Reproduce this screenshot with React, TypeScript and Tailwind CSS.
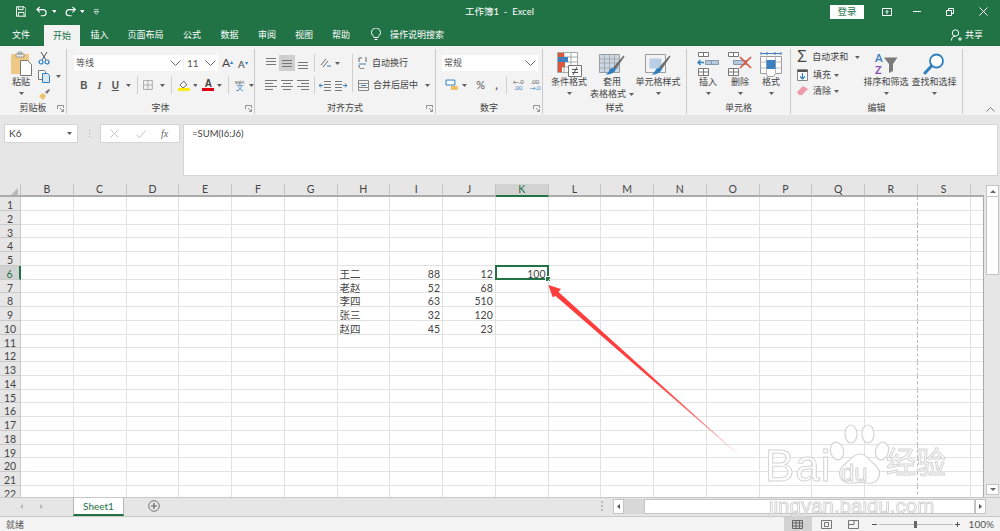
import React from 'react';

const sans = "font-['Lato','Noto_Sans_CJK_SC',sans-serif]";
const columns = ['B', 'C', 'D', 'E', 'F', 'G', 'H', 'I', 'J', 'K', 'L', 'M', 'N', 'O', 'P', 'Q', 'R', 'S'];
const rows = Array.from({ length: 22 }, (_, i) => i + 1);
const data: Record<number, [string, string, string]> = {
  6: ['王二', '88', '12'],
  7: ['老赵', '52', '68'],
  8: ['李四', '63', '510'],
  9: ['张三', '32', '120'],
  10: ['赵四', '45', '23'],
};

const Caret = ({ className = '' }: { className?: string }) => (
  <svg width="5" height="3" viewBox="0 0 5 3" className={className}>
    <path d="M0 0h5L2.5 3z" fill="#5f5f5f" />
  </svg>
);

const Launcher = () => (
  <svg width="7" height="7" viewBox="0 0 7 7" className="absolute right-[2px] bottom-[2px]">
    <path d="M.5 4V.5H6.5V3M3 3l3 3M4 6.5h2.500V4" fill="none" stroke="#7a7a7a" strokeWidth=".8" />
  </svg>
);

const Vsep = () => <div className="w-px h-[18px] bg-[#d0d0d0] shrink-0" />;

const Chevron = () => (
  <svg width="11" height="6" viewBox="0 0 11 6">
    <path d="M.5.5l5 5 5-5" fill="none" stroke="#666" />
  </svg>
);

function Group({ w, label, launcher, children }: { w: string; label: string; launcher?: boolean; children: React.ReactNode }) {
  return (
    <div className={`${w} relative shrink-0 flex flex-col h-[65px] mt-[3px] border-r border-[#c9c9c9]`}>
      <div className="h-[52px] flex-none">{children}</div>
      <div className="flex-1 flex items-center justify-center text-[9px] text-[#444] leading-none">{label}</div>
      {launcher && <Launcher />}
    </div>
  );
}

function BigBtn({ w, icon, lines, caretInline }: { w: string; icon: React.ReactNode; lines: string[]; caretInline?: boolean }) {
  return (
    <div className={`${w} shrink-0 flex flex-col items-center text-[9px] leading-[12px] text-[#444]`}>
      <div className="h-[24px] flex items-center justify-center">{icon}</div>
      <div className="whitespace-nowrap">{lines[0]}</div>
      {caretInline ? (
        <div className="whitespace-nowrap flex items-center gap-[3px]">{lines[1]}<Caret /></div>
      ) : (
        <Caret className="mt-[4px]" />
      )}
    </div>
  );
}

const CondIcon = () => (
  <svg width="26" height="25" viewBox="0 0 26 25">
    <path d="M1.500.5h20v20h-20zM1.500 5h20M1.500 10h20M1.500 15h20M8 .5v20M15 .5v20" fill="#fff" stroke="#a8a8a8" />
    <path d="M2 1h6v4H2z" fill="#d9593d" /><path d="M2 5h10v5H2z" fill="#3f7fc1" /><path d="M2 10h7v5H2z" fill="#d9593d" /><path d="M2 15h4v5H2z" fill="#d9593d" />
    <path d="M12.500 13.500h13v11h-13z" fill="#fff" stroke="#777" />
    <path d="M16 17.500h6M16 20.500h6M17 23l4-8" stroke="#444" fill="none" strokeWidth=".9" />
  </svg>
);

const BrushTable = ({ full }: { full?: boolean }) => (
  <svg width="26" height="25" viewBox="0 0 26 25">
    <path d="M.5 2.500h20v18H.5z" fill={full ? '#f3f3f3' : '#cbd8e8'} stroke="#9c9c9c" />
    {full ? <path d="M4.500 6.500h12v10h-12z" fill="#b9cde5" /> : <path d="M.5 7h20M.5 11h20M.5 16h20M5.500 2.500v18M10.500 2.500v18M15.500 2.500v18" stroke="#a8a8a8" fill="none" />}
    <path d="M14 15.500L24.500 3.500l1 1L17 17z" fill="#6f6f6f" />
    <path d="M17 16.500c-.5 4-6 6.500-10.500 6 2-1 3-2 4-4.500 1.500-2 5-3 6.500-1.500z" fill="#2f7ebd" />
  </svg>
);

const InsertIcon = () => (
  <svg width="22" height="24" viewBox="0 0 22 24">
    <path d="M1.500.5h10v4h-10zM6.500.5v4M1.500 16.500h10v7h-10zM1.500 20h10M6.500 16.500v7" fill="#fff" stroke="#777" />
    <path d="M8.500 8.500h13v4h-13zM14.500 8.500v4" fill="#b5c9de" stroke="#8398ad" />
    <path d="M7 10.500H1M3.500 8L1 10.500 3.500 13" fill="none" stroke="#2f7ebd" strokeWidth="1.300" />
  </svg>
);

const DeleteIcon = () => (
  <svg width="24" height="24" viewBox="0 0 24 24">
    <path d="M.5.500h10v4H.5zM5.500.5v4M.5 16.500h10v7H.5zM.5 20h10M5.500 16.500v7" fill="#fff" stroke="#777" />
    <path d="M5.500 8.500h13v4h-13z" fill="#b5c9de" stroke="#8398ad" />
    <path d="M12 5l11 11M23 5L12 16" stroke="#d9593d" strokeWidth="1.700" fill="none" />
  </svg>
);

const FormatIcon = () => (
  <svg width="22" height="25" viewBox="0 0 22 25">
    <path d="M.5 4.500h21v17h-6l-2 3h-6l-1-3H.5z" fill="#fff" stroke="#9c9c9c" />
    <path d="M.5 10h21M.5 16h21M6.500 4.500v17M15.500 4.500v17" stroke="#b8b8b8" fill="none" />
    <path d="M6.500 8h9v9h-9z" fill="#3f7fc1" />
    <path d="M1 1.500h20M1 0v3M21 0v3M7 0v3M15 0v3" stroke="#3f7fc1" fill="none" />
  </svg>
);

const SortIcon = () => (
  <svg width="24" height="24" viewBox="0 0 24 24">
    <text x="1" y="9.500" fontSize="11" fontWeight="700" fill="#3f7fc1" fontFamily="Lato">A</text>
    <text x="1" y="22" fontSize="11" fontWeight="700" fill="#8a52b8" fontFamily="Lato">Z</text>
    <path d="M10 5.500h13.500L19 12v7l-4 2v-9z" fill="#7b7b7b" />
  </svg>
);

const FindIcon = () => (
  <svg width="22" height="22" viewBox="0 0 22 22">
    <circle cx="13.500" cy="8" r="6.500" fill="#fff" stroke="#2f7ebd" strokeWidth="1.800" />
    <path d="M8.500 13L2 20" stroke="#2f7ebd" strokeWidth="3" strokeLinecap="round" />
  </svg>
);

const AlignLines = ({ kind }: { kind: 'l' | 'c' | 'r' }) => {
  const d = {
    l: 'M1 1.500h12M1 4.500h8M1 7.500h12M1 10.500h8',
    c: 'M1 1.500h12M3 4.500h8M1 7.500h12M3 10.500h8',
    r: 'M1 1.500h12M5 4.500h8M1 7.500h12M5 10.500h8',
  }[kind];
  return (
    <svg width="14" height="12" viewBox="0 0 14 12"><path d={d} stroke="#777" fill="none" /></svg>
  );
};

const VAlign = ({ y }: { y: number }) => (
  <svg width="14" height="12" viewBox="0 0 14 12">
    <path d={`M2 ${y + 0.5}h10M2 ${y + 3.5}h10M2 ${y + 6.5}h10`} stroke="#777" fill="none" />
  </svg>
);

function TitleBar() {
  return (
    <div className="h-[23px] shrink-0 flex items-center text-white relative">
      <div className="flex items-center w-[100px] pl-[16px]">
        <svg width="11" height="11" viewBox="0 0 11 11"><path d="M.5.500h8l2 2v8H.5zM2.500.500v3h5v-3M2.500 10.500v-4h6v4" fill="none" stroke="#fff" /></svg>
        <svg width="13" height="11" viewBox="0 0 13 11" className="ml-[10px]"><path d="M1 3.500h7a3.300 3.300 0 0 1 0 6.500H5M4 .5L1 3.500l3 3" fill="none" stroke="#fff" strokeWidth="1.200" /></svg>
        <Caret className="ml-[3px] brightness-[4]" />
        <svg width="13" height="11" viewBox="0 0 13 11" className="ml-[8px]"><path d="M12 3.500H5a3.300 3.300 0 0 0 0 6.500h3M9 .5l3 3-3 3" fill="none" stroke="#fff" strokeWidth="1.200" /></svg>
        <Caret className="ml-[3px] brightness-[4]" />
        <svg width="7" height="6" viewBox="0 0 7 6" className="ml-[9px]"><path d="M1 .5h5M1 2.500h5L3.500 5.500z" fill="none" stroke="#c8dcd1" /></svg>
      </div>
      <div className="w-[363px] pl-[365px] whitespace-nowrap text-[9.500px] leading-none">工作簿1&nbsp; -&nbsp; Excel</div>
      <div className="ml-auto flex items-center pr-[12px]">
        <div className="w-[34px] h-[14px] bg-white text-[#217346] text-[9.500px] leading-[14px] text-center">登录</div>
        <svg width="10" height="8" viewBox="0 0 10 8" className="ml-[18px]"><path d="M.5.500h9v7h-9zM5 6V3M3.500 4L5 2.500 6.500 4" fill="none" stroke="#fff" /></svg>
        <div className="w-[8px] h-px bg-white ml-[21px]" />
        <svg width="8" height="8" viewBox="0 0 8 8" className="ml-[25px]"><path d="M.5 2.500h5v5h-5zM2.500 2.500v-2h5v5h-2" fill="none" stroke="#fff" /></svg>
        <svg width="9" height="9" viewBox="0 0 9 9" className="ml-[25px]"><path d="M.5.500l8 8M8.500.500l-8 8" stroke="#fff" /></svg>
      </div>
    </div>
  );
}

function Tabs() {
  const tabs: [string, string][] = [
    ['插入', 'w-[39px]'], ['页面布局', 'w-[53px]'], ['公式', 'w-[40px]'], ['数据', 'w-[35px]'],
    ['审阅', 'w-[40px]'], ['视图', 'w-[34px]'], ['帮助', 'w-[40px]'],
  ];
  return (
    <div className="h-[23px] shrink-0 flex items-stretch text-[9px] text-white">
      <div className="w-[42px] flex items-center justify-center">文件</div>
      <div className="w-[36px] ml-[2px] mt-[2px] bg-[#f3f3f3] text-[#217346] flex items-center justify-center">开始</div>
      {tabs.map(([t, w]) => (
        <div key={t} className={`${w} flex items-center justify-center`}>{t}</div>
      ))}
      <div className="flex items-center ml-[10px]">
        <svg width="10" height="13" viewBox="0 0 10 13"><path d="M3 9.500C2.500 7.500.5 7 .5 4.500a4.500 4.500 0 0 1 9 0C9.500 7 7.500 7.500 7 9.500zM3.500 11.500h3" fill="none" stroke="#fff" /></svg>
        <span className="ml-[9px]">操作说明搜索</span>
      </div>
      <div className="ml-auto flex items-center pr-[17px]">
        <svg width="11" height="12" viewBox="0 0 11 12"><circle cx="4.500" cy="4" r="3.200" fill="none" stroke="#fff" /><path d="M.5 11.500c0-3 1.500-4.300 4-4.300M7 10h4M9 8v4" fill="none" stroke="#fff" /></svg>
        <span className="ml-[3px]">共享</span>
      </div>
    </div>
  );
}

function Ribbon() {
  return (
    <div className="h-[69px] shrink-0 bg-[#f3f3f3] flex">
      <Group w="w-[67px]" label="剪贴板" launcher>
        <div className="flex pt-[2px]">
          <div className="w-[38px] pl-[4px] flex flex-col items-center text-[9px] leading-[12px] text-[#444]">
            <svg width="22" height="25" viewBox="0 0 22 25">
              <path d="M1 3h18v20H1z" fill="#efc983" />
              <path d="M6 3h8v3H6zM8 1h4v2H8z" fill="#eee" stroke="#888" strokeWidth=".8" />
              <path d="M10.500 9.500h7l4 4v11h-11z" fill="#fff" stroke="#777" />
            </svg>
            <span className="whitespace-nowrap">粘贴</span>
            <Caret className="mt-[4px]" />
          </div>
          <div className="flex flex-col gap-[5px] pt-[1px]">
            <svg width="12" height="13" viewBox="0 0 12 13"><path d="M3 0l5 8M9 0L4 8" stroke="#555" fill="none" /><circle cx="3" cy="10" r="2" fill="none" stroke="#2f7ebd" strokeWidth="1.200" /><circle cx="9" cy="10" r="2" fill="none" stroke="#2f7ebd" strokeWidth="1.200" /></svg>
            <div className="flex items-center gap-[6px]">
              <svg width="12" height="13" viewBox="0 0 12 13"><path d="M.5.500h6l1 1v8h-7z" fill="#fff" stroke="#777" /><path d="M4.500 3.500h5l2 2v7h-7z" fill="#dbe7f3" stroke="#2f7ebd" /></svg>
              <Caret />
            </div>
            <svg width="13" height="12" viewBox="0 0 13 12"><path d="M1 8l4-3 3 3-3 4z" fill="#efc062" /><path d="M7 4l4-3 1 1-3 4z" fill="#777" /></svg>
          </div>
        </div>
      </Group>

      <Group w="w-[188px]" label="字体" launcher>
        <div className="pl-[7px] pt-[6px]">
          <div className="flex h-[16px]">
            <div className="w-[109px] bg-white flex items-center justify-between pl-[2px] pr-[2px] text-[9px] text-[#555]">等线<Chevron /></div>
            <div className="w-[34px] ml-px bg-white flex items-center justify-between pl-[3px] pr-[2px] text-[10px] text-[#555]">11<Chevron /></div>
            <span className="ml-[4px] w-[16px] text-[12px] text-[#444] leading-[16px]">A<sup className="text-[#2f7ebd] text-[6px]">▴</sup></span>
            <span className="w-[16px] text-[10px] text-[#444] leading-[18px]">A<sup className="text-[#2f7ebd] text-[6px]">▾</sup></span>
          </div>
          <div className="flex items-center h-[16px] mt-[6px] text-[#555] text-[10px] font-['Liberation_Sans',sans-serif]">
            <span className="w-[16px] ml-[2px] text-center font-bold">B</span>
            <span className="w-[16px] text-center italic font-bold font-['Liberation_Serif',serif]">I</span>
            <span className="w-[16px] text-center font-bold underline">U</span>
            <Caret className="ml-[3px]" />
            <div className="ml-[6px]"><Vsep /></div>
            <svg width="11" height="11" viewBox="0 0 11 11" className="ml-[5px]"><path d="M.5.500h9v9h-9zM5 .5v9M.5 5h9" fill="none" stroke="#aaa" /></svg>
            <Caret className="ml-[6px]" />
            <div className="ml-[6px]"><Vsep /></div>
            <svg width="12" height="12" viewBox="0 0 12 12" className="ml-[6px]"><path d="M2 6l4-4 3 4-4 3z" fill="#fff" stroke="#666" /><path d="M0 9h12v3H0z" fill="#ffea00" /></svg>
            <Caret className="ml-[3px]" />
            <div className="ml-[5px] w-[12px] flex flex-col items-center leading-[9px]">
              <span className="text-[10px] text-[#444] font-bold">A</span>
              <span className="w-[12px] h-[3px] bg-[#e0000f]" />
            </div>
            <Caret className="ml-[3px]" />
            <div className="ml-[6px]"><Vsep /></div>
            <div className="ml-[4px] w-[13px] flex flex-col items-center text-[5px] leading-[6px]"><span>wén</span><span className="text-[8px] text-[#2f7ebd]">文</span></div>
            <Caret className="ml-[3px]" />
          </div>
        </div>
      </Group>

      <Group w="w-[181px]" label="对齐方式" launcher>
        <div className="flex pt-[6px]">
          <div className="flex flex-col pl-[8px]">
            <div className="flex items-center h-[16px]">
              <div className="w-[16px] flex justify-center"><VAlign y={1} /></div>
              <div className="w-[16px] h-[16px] bg-[#cfcfcf] flex items-center justify-center"><VAlign y={3} /></div>
              <div className="w-[16px] flex justify-center"><VAlign y={5} /></div>
              <div className="ml-[3px]"><Vsep /></div>
              <svg width="12" height="11" viewBox="0 0 12 11" className="ml-[5px]"><path d="M1 7l5-6M3 9l5-6" stroke="#666" fill="none" /><path d="M7 8h4" stroke="#2f7ebd" /></svg>
              <Caret className="ml-[3px]" />
            </div>
            <div className="flex items-center h-[16px] mt-[6px]">
              <div className="w-[16px] flex justify-center"><AlignLines kind="l" /></div>
              <div className="w-[16px] flex justify-center"><AlignLines kind="c" /></div>
              <div className="w-[16px] flex justify-center"><AlignLines kind="r" /></div>
              <div className="ml-[3px]"><Vsep /></div>
              <svg width="12" height="11" viewBox="0 0 12 11" className="ml-[4px]"><path d="M5 1.500h7M5 4.500h7M5 7.500h7M5 10.500h7" stroke="#777" /><path d="M4 5.500H0M2 3.500L0 5.500l2 2" stroke="#2f7ebd" fill="none" /></svg>
              <svg width="12" height="11" viewBox="0 0 12 11" className="ml-[4px]"><path d="M0 1.500h7M0 4.500h7M0 7.500h7M0 10.500h7" stroke="#777" /><path d="M8 5.500h4M10 3.500l2 2-2 2" stroke="#2f7ebd" fill="none" /></svg>
            </div>
          </div>
          <div className="ml-[5px] mt-[-1px] h-[38px] w-px bg-[#d0d0d0]" />
          <div className="flex flex-col pl-[5px] text-[9px] text-[#444]">
            <div className="flex items-center h-[16px]">
              <svg width="10" height="12" viewBox="0 0 10 12"><path d="M1 5V1h3M8 0v5M1 8a3 3 0 0 0 5 3" fill="none" stroke="#666" /><path d="M1 7h7" stroke="#2f7ebd" /></svg>
              <span className="ml-[4px]">自动换行</span>
            </div>
            <div className="flex items-center h-[16px] mt-[6px]">
              <svg width="11" height="11" viewBox="0 0 11 11"><path d="M.5.500h10v10H.5zM.5 3.500h10M.5 7.500h10" fill="none" stroke="#888" /><path d="M3 5.500h5" stroke="#2f7ebd" /></svg>
              <span className="ml-[4px]">合并后居中</span>
              <Caret className="ml-[7px]" />
            </div>
          </div>
        </div>
      </Group>

      <Group w="w-[107px]" label="数字" launcher>
        <div className="pl-[6px] pt-[6px]">
          <div className="w-[96px] h-[16px] bg-white flex items-center justify-between px-[2px] text-[9px] text-[#555]">常规<Chevron /></div>
          <div className="flex items-center h-[16px] mt-[6px] text-[#555]">
            <svg width="14" height="12" viewBox="0 0 14 12" className="ml-[3px]"><path d="M1 1h9v5H1z" fill="#fff" stroke="#2f7ebd" /><path d="M6 7h7v4H6z" fill="#efc062" /></svg>
            <Caret className="ml-[3px]" />
            <span className="ml-[8px] w-[12px] text-[11px] text-center">%</span>
            <span className="ml-[6px] w-[8px] text-[11px] font-bold text-center">,</span>
            <div className="ml-[6px]"><Vsep /></div>
            <div className="ml-[4px] w-[14px] text-[6px] leading-[6px] text-center">←.0<br /><span className="text-[#2f7ebd]">.00</span></div>
            <div className="ml-[3px] w-[14px] text-[6px] leading-[6px] text-center">.00<br /><span className="text-[#2f7ebd]">→.0</span></div>
          </div>
        </div>
      </Group>

      <Group w="w-[144px]" label="样式">
        <div className="flex pl-[2px] pt-[3px]">
          <BigBtn w="w-[48px]" icon={<CondIcon />} lines={['条件格式']} />
          <BigBtn w="w-[38px]" icon={<BrushTable />} lines={['套用', '表格格式']} caretInline />
          <BigBtn w="w-[54px]" icon={<BrushTable full />} lines={['单元格样式']} />
        </div>
      </Group>

      <Group w="w-[104px]" label="单元格">
        <div className="flex pl-[5px] pt-[3px]">
          <BigBtn w="w-[32px]" icon={<InsertIcon />} lines={['插入']} />
          <BigBtn w="w-[32px]" icon={<DeleteIcon />} lines={['删除']} />
          <BigBtn w="w-[30px]" icon={<FormatIcon />} lines={['格式']} />
        </div>
      </Group>

      <Group w="w-[172px]" label="编辑">
        <div className="flex">
          <div className="w-[69px] pl-[6px] text-[9px] text-[#444] flex flex-col whitespace-nowrap">
            <div className="flex items-center h-[16px]">
              <span className="w-[15px] text-[16px] leading-none text-[#444] font-['Liberation_Sans',sans-serif]">Σ</span>
              <span className="ml-px">自动求和</span><Caret className="ml-[7px]" />
            </div>
            <div className="flex items-center h-[16px] mt-[2px]">
              <svg width="11" height="12" viewBox="0 0 11 12"><path d="M.5.500h10v11H.5z" fill="#fff" stroke="#888" /><path d="M.5 2h10" stroke="#555" strokeWidth="2" /><path d="M5.500 4v6M3 7.500L5.500 10 8 7.500" stroke="#2f7ebd" fill="none" strokeWidth="1.200" /></svg>
              <span className="ml-[5px]">填充</span><Caret className="ml-[3px]" />
            </div>
            <div className="flex items-center h-[16px]">
              <svg width="11" height="10" viewBox="0 0 11 10"><path d="M0 6l6-6 5 3-6 6H2z" fill="#ee9aa8" /></svg>
              <span className="ml-[5px]">清除</span><Caret className="ml-[3px]" />
            </div>
          </div>
          <div className="flex pt-[3px]">
            <BigBtn w="w-[52px]" icon={<SortIcon />} lines={['排序和筛选']} />
            <BigBtn w="w-[44px]" icon={<FindIcon />} lines={['查找和选择']} />
          </div>
        </div>
      </Group>

      <div className="flex-1 flex items-end justify-end pr-[5px] pb-[3px]">
        <svg width="9" height="5" viewBox="0 0 9 5"><path d="M.5 4.500l4-4 4 4" fill="none" stroke="#777" /></svg>
      </div>
    </div>
  );
}

function FormulaBar() {
  return (
    <div className="h-[69px] shrink-0 flex items-start pt-[9px] pl-[4px] pr-[2px] bg-[#e6e6e6]">
      <div className="w-[74px] h-[19px] bg-white border border-[#d4d4d4] flex items-center justify-between pl-[4px] pr-[5px] text-[10px] text-[#444]">K6<Caret /></div>
      <div className="w-[22px] h-[19px] flex flex-col items-center justify-center gap-[2px]">
        <span className="w-px h-px bg-[#aaa]" /><span className="w-px h-px bg-[#aaa]" /><span className="w-px h-px bg-[#aaa]" />
      </div>
      <div className="w-[80px] h-[19px] bg-white border border-[#d4d4d4] flex items-center text-[#bbb]">
        <svg width="9" height="9" viewBox="0 0 9 9" className="ml-[9px]"><path d="M.5.500l8 8M8.500.500l-8 8" stroke="#c4c4c4" /></svg>
        <svg width="10" height="8" viewBox="0 0 10 8" className="ml-[17px]"><path d="M.5 5l3 2.500L9.500.5" stroke="#c4c4c4" fill="none" /></svg>
        <span className="ml-[15px] text-[10px] italic text-[#666] font-['Liberation_Serif',serif]">fx</span>
      </div>
      <div className="flex-1 h-[52px] ml-[3px] bg-white border border-[#d4d4d4] pl-[8px] pt-[2px] text-[9.500px] leading-[13px] text-[#444]">=SUM(I6:J6)</div>
    </div>
  );
}

function Sheet() {
  return (
    <div className="flex h-[313px] shrink-0 bg-[#e6e6e6]">
      <div className="w-[984px] shrink-0 overflow-hidden flex flex-col">
        <div className="flex h-[13px] shrink-0 border-b-2 border-[#ababab] text-[10.500px] leading-[11px] text-[#444]">
          <div className="w-[21px] shrink-0 relative border-r border-[#c4c4c4]">
            <svg width="7" height="7" viewBox="0 0 7 7" className="absolute right-[2px] bottom-0"><path d="M7 0v7H0z" fill="#b9b9b9" /></svg>
          </div>
          {columns.map((c) => (
            <div key={c} className={`w-[52.750px] shrink-0 text-center border-r border-[#c4c4c4] ${c === 'K' ? 'bg-[#d2d2d2] text-[#217346] -mb-[2px] h-[13px] border-b-2 border-b-[#217346]' : ''}`}>{c}</div>
          ))}
          <div className="flex-1" />
        </div>
        <div className="flex-1 overflow-hidden bg-white border-r border-[#ababab]">
          {rows.map((r) => {
            const row = data[r];
            return (
              <div key={r} className="flex h-[13.750px] text-[10.500px] leading-[10px] text-[#444]">
                <div className={`w-[21px] shrink-0 pt-[3px] text-center border-r border-b border-[#c9c9c9] ${r === 6 ? 'bg-[#d2d2d2] text-[#217346] border-r-[#217346] border-r-2' : 'bg-[#e6e6e6]'}`}>{r}</div>
                {columns.map((c) => {
                  let text = '';
                  if (row && c === 'H') text = row[0];
                  if (row && c === 'I') text = row[1];
                  if (row && c === 'J') text = row[2];
                  if (r === 6 && c === 'K') text = '100';
                  return (
                    <div key={c} className={`relative w-[52.750px] shrink-0 pt-[3px] border-b border-[#e2e2e2] border-r ${c === 'R' ? 'border-r-[#b9b9b9] [border-right-style:dashed]' : 'border-r-[#e2e2e2]'} ${c === 'H' ? 'text-left pl-[2px]' : 'text-right pr-[2px]'}`}>
                      {text}
                      {r === 6 && c === 'K' && (
                        <>
                          <div className="absolute -left-px -top-px -right-px -bottom-px border-2 border-[#217346]" />
                          <div className="absolute -right-[3px] -bottom-[3px] w-[6px] h-[6px] bg-[#217346] border border-white" />
                        </>
                      )}
                    </div>
                  );
                })}
                <div className="flex-1 border-b border-[#e2e2e2]" />
              </div>
            );
          })}
        </div>
      </div>
      <div className="flex-1 flex flex-col pl-[2px] pr-px pt-px">
        <div className="h-[12px] bg-white border border-[#c4c4c4] flex items-center justify-center">
          <svg width="6" height="3" viewBox="0 0 6 3"><path d="M0 3h6L3 0z" fill="#666" /></svg>
        </div>
        <div className="h-[78px] bg-white border-x border-b border-[#c4c4c4]" />
        <div className="flex-1" />
        <div className="h-[11px] mb-[2px] bg-white border border-[#c4c4c4] flex items-center justify-center">
          <svg width="6" height="3" viewBox="0 0 6 3"><path d="M0 0h6L3 3z" fill="#666" /></svg>
        </div>
      </div>
    </div>
  );
}

function SheetTabs() {
  return (
    <div className="h-[20px] shrink-0 bg-[#e6e6e6] border-y border-[#c8c8c8] flex items-start">
      <div className="w-[73px] h-[16px] flex items-center pl-[20px] gap-[17px]">
        <svg width="3" height="5" viewBox="0 0 3 5"><path d="M3 0v5L0 2.500z" fill="#bbb" /></svg>
        <svg width="3" height="5" viewBox="0 0 3 5"><path d="M0 0v5l3-2.500z" fill="#bbb" /></svg>
      </div>
      <div className="w-[51px] h-[18px] bg-white border-x border-b-2 border-x-[#b5b5b5] border-b-[#217346] text-[10px] leading-[16px] text-[#217346] text-center">Sheet1</div>
      <div className="h-[16px] flex items-center ml-[24px]">
        <svg width="12" height="12" viewBox="0 0 12 12"><circle cx="6" cy="6" r="5.300" fill="none" stroke="#777" /><path d="M3 6h6M6 3v6" stroke="#666" strokeWidth="1.200" /></svg>
      </div>
      <div className="ml-[441px] h-[16px] flex flex-col justify-center gap-[2px]">
        <span className="w-[2px] h-[2px] bg-[#bbb]" /><span className="w-[2px] h-[2px] bg-[#bbb]" /><span className="w-[2px] h-[2px] bg-[#bbb]" />
      </div>
      <div className="ml-[10px] flex h-[15px] w-[373px] mt-px bg-[#d8d8d8]">
        <div className="w-[11px] bg-white border border-[#c4c4c4] flex items-center justify-center">
          <svg width="3" height="5" viewBox="0 0 3 5"><path d="M3 0v5L0 2.500z" fill="#555" /></svg>
        </div>
        <div className="w-[20px]" />
        <div className="w-[331px] bg-white border border-[#c4c4c4]" />
        <div className="w-[11px] bg-white border border-[#c4c4c4] flex items-center justify-center">
          <svg width="3" height="5" viewBox="0 0 3 5"><path d="M0 0v5l3-2.500z" fill="#555" /></svg>
        </div>
      </div>
    </div>
  );
}

function StatusBar() {
  return (
    <div className="h-[14px] shrink-0 overflow-hidden bg-[#f3f3f3] flex items-stretch text-[9px] leading-none text-[#555]">
      <div className="pl-[6px] flex items-center">就绪</div>
      <div className="ml-auto flex items-center pr-[6px]">
        <div className="w-[28px] h-full bg-[#d2d2d2] flex items-center justify-center">
          <svg width="11" height="9" viewBox="0 0 11 9"><path d="M.5.500h10v8H.5zM.5 3h10M.5 6h10M4 .5v8M7.500.5v8" fill="none" stroke="#666" /></svg>
        </div>
        <svg width="11" height="9" viewBox="0 0 11 9" className="ml-[9px]"><path d="M.5.500h10v8H.5zM3.500 2.500h4v4h-4z" fill="none" stroke="#777" /></svg>
        <svg width="11" height="9" viewBox="0 0 11 9" className="ml-[16px]"><path d="M.5.500h10v8H.5zM6 .5v4H.5" fill="none" stroke="#777" /></svg>
        <div className="ml-[13px] w-[5px] h-px bg-[#555]" />
        <div className="ml-[2px] w-[74px] h-px bg-[#bbb] relative">
          <div className="absolute left-[35px] -top-[3px] w-[3px] h-[7px] bg-[#666]" />
        </div>
        <svg width="5" height="5" viewBox="0 0 5 5" className="ml-[2px]"><path d="M0 2.500h5M2.500 0v5" stroke="#555" /></svg>
        <span className={`ml-[9px] text-[10px] ${sans}`}>100%</span>
      </div>
    </div>
  );
}

function Watermark() {
  const stroke = "text-white whitespace-nowrap [-webkit-text-stroke:1px_#d0d0d0] font-['Liberation_Sans','Noto_Sans_CJK_SC',sans-serif]";
  return (
    <div className="absolute left-[765px] top-[424px] w-[185px] h-[100px] pointer-events-none opacity-90">
      <svg width="70" height="70" viewBox="0 0 70 70" className="absolute left-[60px] top-0">
        <g fill="#fff" stroke="#d0d0d0" strokeWidth="1.200">
          <ellipse cx="12" cy="27" rx="6.500" ry="9" transform="rotate(-15 12 27)" />
          <ellipse cx="26" cy="10" rx="6" ry="9" />
          <ellipse cx="43" cy="10" rx="6" ry="9" />
          <ellipse cx="57" cy="27" rx="6.500" ry="9" transform="rotate(15 57 27)" />
          <path d="M35 30c6 0 8 5 13 9 5 4 8 8 6 14-2 5-7 7-12 6-5-1-9-1-14 0-5 1-11-1-13-6-2-6 1-10 6-14 5-4 8-9 14-9z" />
        </g>
      </svg>
      <span className={`absolute left-0 top-[20px] text-[44px] leading-none tracking-[1px] ${stroke}`}>Bai</span>
      <span className={`absolute left-[76px] top-[37px] text-[24px] leading-none ${stroke}`}>du</span>
      <span className={`absolute left-[121px] top-[24px] text-[30px] leading-none ${stroke}`}>经验</span>
      <span className={`absolute left-[4px] top-[72px] text-[20.500px] leading-none ${stroke}`}>jingyan.baidu.com</span>
    </div>
  );
}

export default function App() {
  return (
    <div className={`relative w-[1000px] h-[531px] overflow-hidden flex flex-col bg-[#217346] ${sans}`}>
      <TitleBar />
      <Tabs />
      <Ribbon />
      <FormulaBar />
      <Sheet />
      <SheetTabs />
      <StatusBar />
      <svg width="1000" height="531" viewBox="0 0 1000 531" className="absolute inset-0 pointer-events-none">
        <defs>
          <linearGradient id="tail" x1="650" y1="375" x2="741" y2="457" gradientUnits="userSpaceOnUse">
            <stop offset="0" stopColor="#ff3d3d" />
            <stop offset="1" stopColor="#ff9a9a" />
          </linearGradient>
        </defs>
        <path d="M548.300 285L561 289 558.500 292 740.700 456.700 555.500 296 552.700 297.300z" fill="url(#tail)" />
      </svg>
      <Watermark />
    </div>
  );
}
